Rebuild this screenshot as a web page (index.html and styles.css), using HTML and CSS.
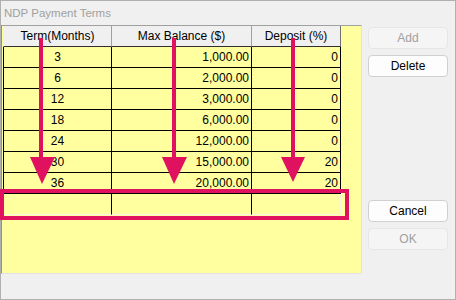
FILE: index.html
```html
<!DOCTYPE html>
<html lang="en">
<head>
    <meta charset="UTF-8">
    <title>NDP Payment Terms</title>
    <link rel="stylesheet" href="styles.css">
</head>
<body>
    <div class="window">
        <div class="title">NDP Payment Terms</div>
        <div class="main">
            <div class="grid">
                <div class="row head">
                    <div class="cell c1">Term(Months)</div>
                    <div class="cell c2">Max Balance ($)</div>
                    <div class="cell c3">Deposit (%)</div>
                </div>
                <div class="row">
                    <div class="cell c1">3</div>
                    <div class="cell c2">1,000.00</div>
                    <div class="cell c3">0</div>
                </div>
                <div class="row">
                    <div class="cell c1">6</div>
                    <div class="cell c2">2,000.00</div>
                    <div class="cell c3">0</div>
                </div>
                <div class="row">
                    <div class="cell c1">12</div>
                    <div class="cell c2">3,000.00</div>
                    <div class="cell c3">0</div>
                </div>
                <div class="row">
                    <div class="cell c1">18</div>
                    <div class="cell c2">6,000.00</div>
                    <div class="cell c3">0</div>
                </div>
                <div class="row">
                    <div class="cell c1">24</div>
                    <div class="cell c2">12,000.00</div>
                    <div class="cell c3">0</div>
                </div>
                <div class="row">
                    <div class="cell c1">30</div>
                    <div class="cell c2">15,000.00</div>
                    <div class="cell c3">20</div>
                </div>
                <div class="row">
                    <div class="cell c1">36</div>
                    <div class="cell c2">20,000.00</div>
                    <div class="cell c3">20</div>
                </div>
                <div class="row new">
                    <div class="cell c1"></div>
                    <div class="cell c2"></div>
                    <div class="cell c3"></div>
                </div>
            </div>
            <div class="buttons">
                <div class="group">
                    <button disabled>Add</button>
                    <button>Delete</button>
                </div>
                <div class="group">
                    <button>Cancel</button>
                    <button disabled>OK</button>
                </div>
            </div>
        </div>

        <!-- annotation drawn over the dialog -->
        <svg class="marks" width="456" height="300" viewBox="0 0 456 300">
            <g fill="#e0115f">
                <rect x="39" y="38" width="4" height="122"/>
                <polygon points="30,157 55,157 42,184"/>
                <rect x="172" y="38" width="4" height="122"/>
                <polygon points="162,157 187,157 174,184"/>
                <rect x="291" y="38" width="4" height="122"/>
                <polygon points="281,157 305,157 293,182"/>
            </g>
            <rect x="2" y="191" width="345" height="27" fill="none" stroke="#e0115f" stroke-width="4"/>
        </svg>
    </div>
</body>
</html>
```

FILE: styles.css
```css
body {
    margin: 0;
    font-family: "Liberation Sans", Arial, sans-serif;
    font-size: 12px;
    background: #f0f0f0;
}
.window {
    position: relative;
    width: 456px;
    height: 300px;
    box-sizing: border-box;
    border: 1px solid #b0b0b0;
    background: #f0f0f0;
}
.title {
    height: 24px;
    line-height: 24px;
    padding-left: 3px;
    font-size: 11.5px;
    color: #a0a0a0;
}
.main {
    display: flex;
}
.grid {
    width: 361px;
    height: 249px;
    box-sizing: border-box;
    border-top: 1px solid #a0a0a0;
    border-left: 1px solid #909090;
    border-right: 1px solid #e2e2e2;
    border-bottom: 1px solid #e2e2e2;
    background: #ffffa0;
    padding-left: 1px;
}
.row {
    display: flex;
}
.cell {
    box-sizing: border-box;
    height: 21px;
    line-height: 20px;
    padding: 0 2px;
    border-right: 1px solid #000;
    border-bottom: 1px solid #000;
    color: #000;
    white-space: nowrap;
}
.c1 {
    width: 109px;
    border-left: 1px solid #000;
    text-align: center;
}
.c2 {
    width: 140px;
    text-align: right;
}
.c3 {
    width: 89px;
    text-align: right;
}
.head .cell {
    background: #f0f0f0;
    text-align: center;
    border-right-color: #a0a0a0;
    border-bottom-color: #303030;
}
.head .c1 {
    border-left-color: #f0f0f0;
}
.head .c3 {
    border-right-color: #707070;
}
.new .cell {
    border-bottom-color: #f4f4e4;
}
.new .c3 {
    border-right-color: #f4f4e4;
}
.buttons {
    flex: 1;
    display: flex;
    flex-direction: column;
    justify-content: space-between;
    padding: 2px 0 24px 6px;
}
.group {
    display: flex;
    flex-direction: column;
    gap: 6px;
}
button {
    width: 80px;
    height: 22px;
    padding: 0;
    font-family: "Liberation Sans", Arial, sans-serif;
    font-size: 12px;
    color: #000;
    background: #fdfdfd;
    border: 1px solid #d0d0d0;
    border-radius: 4px;
}
button:disabled {
    color: #a0a0a0;
    background: #f5f5f5;
    border-color: #e6e6e6;
}
.marks {
    position: absolute;
    left: -1px;
    top: -1px;
}
```
